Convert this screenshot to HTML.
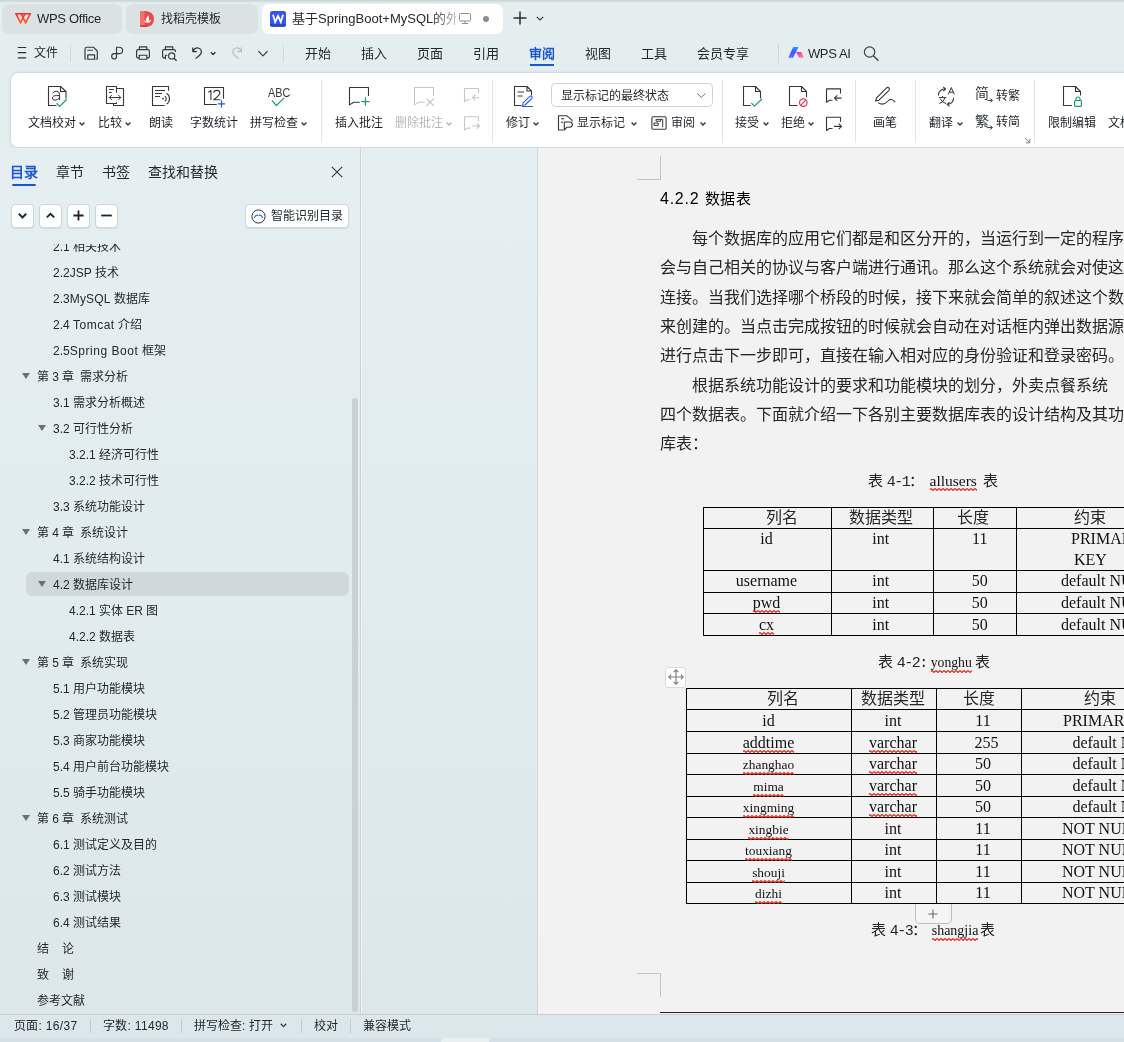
<!DOCTYPE html>
<html lang="zh-CN">
<head>
<meta charset="utf-8">
<title>WPS</title>
<style>
*{box-sizing:border-box;margin:0;padding:0}
html,body{width:1124px;height:1042px;overflow:hidden}
body{position:relative;background:#e4eeef;font-family:"Liberation Sans",sans-serif;font-size:13px;color:#1f2329}
.abs{position:absolute}
svg{position:absolute;overflow:visible}
.t{position:absolute;white-space:nowrap;line-height:1}
/* ---------- tab bar ---------- */
#top{left:0;top:0;width:1124px;height:148px;background:#e4eeef}
.tab{position:absolute;top:4px;height:29.5px;border-radius:7px;background:#dae2e4}
.tab.act{background:#fff;top:3.5px;height:30px}
.tab .t{top:7px;font-size:14px;color:#24292e}
/* ---------- menu row ---------- */
.mi{position:absolute;top:46px;font-size:13px;line-height:16px;color:#24292e;white-space:nowrap}
.vsep{position:absolute;width:1px;background:#cfd8da}
/* ---------- ribbon ---------- */
#ribbon{left:11px;top:73px;width:1130px;height:74px;background:#fff;border-radius:7px;box-shadow:0 0 3px rgba(60,80,90,.30)}
.rl{position:absolute;top:116px;font-size:12px;line-height:14px;color:#1f2329;white-space:nowrap;letter-spacing:0}
.rl.dis{color:#b4b8bc}
.rsep{position:absolute;top:80px;height:63px;width:1px;background:#e2e5e7}
/* ---------- sidebar ---------- */
#side{left:0;top:148px;width:360px;height:866px;background:linear-gradient(180deg,#e5eff1 0%,#e1ecef 50%,#dbe7eb 100%)}
#mid{left:362px;top:148px;width:176px;height:866px;background:linear-gradient(180deg,#e5eff1 0%,#e1ecef 50%,#dbe7eb 100%)}
#sdiv{left:360px;top:148px;width:2px;height:866px;background:linear-gradient(90deg,#ccd4d7 50%,#eef3f4 50%)}
.st{position:absolute;top:164px;font-size:14px;line-height:16px;color:#24292e;white-space:nowrap}
.sb{position:absolute;top:204px;height:23.5px;width:23px;border:1px solid #cfd5d8;border-radius:4px;background:#fdfefe;box-shadow:0 1px 1px rgba(80,100,110,.12)}
.toc{position:absolute;font-size:12px;line-height:14px;color:#24292e;white-space:nowrap}
.tri{position:absolute;width:0;height:0;border-left:4px solid transparent;border-right:4px solid transparent;border-top:6px solid #6b7075}
/* ---------- page ---------- */
#page{left:537px;top:148px;width:587px;height:866px;background:#f2f2f2;border-left:1px solid #d3d7d9;overflow:hidden;font-family:"Liberation Serif",serif;color:#111}

#page .p{font-size:16px;line-height:16px;color:#262626}
#page .c{font-size:15px;line-height:16px;color:#262626}
#page .m{font-family:"Liberation Mono",monospace;letter-spacing:-1.5px}
#page .h{font-size:16px;line-height:16px;color:#262626}
#page .l{font-size:16px;line-height:16px;color:#111}
#page .w{position:relative;display:inline-block}
#page .w .sq{position:absolute;left:0;bottom:-2px;width:100%;height:3px;overflow:hidden}
/* ---------- status ---------- */
#status{left:0;top:1014px;width:1124px;height:28px;background:#dce7eb;border-top:1px solid #c6d0d4}
.ss{position:absolute;top:1019px;font-size:12px;line-height:14px;color:#24292e;white-space:nowrap}
</style>
</head>
<body>
<div id="root" style="position:absolute;left:0;top:0;width:1124px;height:1042px;will-change:transform;overflow:hidden">
<div id="top" class="abs"></div>
<!--TABS-->
<div class="abs" style="left:0;top:0;width:1124px;height:3px;background:linear-gradient(180deg,rgba(90,110,120,.22),rgba(90,110,120,0))"></div>
<div class="tab" style="left:2px;width:120px"></div>
<svg style="left:0;top:0" width="600" height="40" viewBox="0 0 600 40" fill="none">
<defs><linearGradient id="wl" x1="0" y1="0" x2="0" y2="1"><stop offset="0" stop-color="#ff2a2a"/><stop offset="1" stop-color="#ff5a1a"/></linearGradient></defs>
<path d="M16 13.8 H25 L20.5 22.8 Z M21.2 13.8 H30.2 L25.7 22.8 Z" stroke="url(#wl)" stroke-width="1.6" stroke-linejoin="miter"/>
</svg>
<div class="t" style="left:37px;top:12px;font-size:13px;letter-spacing:-.3px;color:#24292e">WPS Office</div>
<div class="tab" style="left:126px;width:132px"></div>
<svg style="left:140px;top:11px" width="14" height="16" viewBox="0 0 14 16"><path d="M0 2 Q0 0 2 0 L6 0 Q14 1 14 8 Q14 15 6 16 L2 16 Q0 16 0 14Z" fill="#ec4a4a"/><path d="M0 2 Q0 0 2 0 L4.6 0 L4.6 16 L2 16 Q0 16 0 14Z" fill="#f47068"/><path d="M0 14.2 H8 Q7 16 6 16 H2 Q0 16 0 14.2Z" fill="#d93636"/><path d="M7.3 12 C5.3 10 5.8 6.5 8.4 4.2 C9.4 7 9.4 10 7.3 12Z M8 12.2 C9.3 11.8 10.8 10.6 11.2 8.4 C9.8 8.8 8.6 10 8 12.2Z M6.6 12.2 C6.2 10.6 5.4 9.6 4.2 9.2 C4.4 10.8 5.2 11.8 6.6 12.2Z" fill="#fff"/></svg>
<div class="t" style="left:161px;top:13px;font-size:12px;color:#24292e">找稻壳模板</div>
<div class="tab act" style="left:262px;width:241px"></div>
<svg style="left:270px;top:11px" width="16" height="16" viewBox="0 0 16 16"><rect x="0" y="0" width="16" height="15.8" rx="2.2" fill="#3458ea"/><path d="M0 13 H16 V13.6 Q16 15.8 13.8 15.8 H2.2 Q0 15.8 0 13.6Z" fill="#2747c9"/><path d="M3 3.8 L5.2 11 L8 5 L10.8 11 L13 3.8" fill="none" stroke="#fff" stroke-width="1.8" stroke-linejoin="miter"/></svg>
<div class="t" style="left:292px;top:10px;font-size:13px;line-height:18px;height:18px;color:#24292e;width:164px;overflow:hidden;-webkit-mask-image:linear-gradient(90deg,#000 85%,rgba(0,0,0,.28) 100%);mask-image:linear-gradient(90deg,#000 85%,rgba(0,0,0,.28) 100%)">基于SpringBoot+MySQL的外卖</div>
<svg style="left:459px;top:13px" width="12" height="11" viewBox="0 0 12 11"><rect x="0.5" y="0.5" width="11" height="7.5" rx="1.2" fill="none" stroke="#8a9094" stroke-width="1"/><path d="M6 8 V10 M3 10.5 H9" stroke="#8a9094" stroke-width="1" fill="none"/></svg>
<div class="abs" style="left:483px;top:16px;width:6px;height:6px;border-radius:3px;background:#8a8e92"></div>
<svg style="left:513px;top:11px" width="14" height="14" viewBox="0 0 14 14"><path d="M7 0.5 V13.5 M0.5 7 H13.5" stroke="#2b2f33" stroke-width="1.5"/></svg>
<svg style="left:536px;top:16px" width="8" height="5" viewBox="0 0 8 5"><path d="M0.8 0.8 L4 4 L7.2 0.8" fill="none" stroke="#3a3f44" stroke-width="1.2"/></svg>
<!--/TABS-->
<!--MENU-->
<svg style="left:0;top:36px" width="900" height="34" viewBox="0 36 900 34" fill="none" stroke="#33383d" stroke-width="1.15" stroke-linejoin="round">
<path d="M17.8 47.5 H26.2 M17.8 52.6 H26.2 M17.8 57.8 H26.2" stroke="#2b2f33"/>
<!-- save -->
<path d="M86.4 59 H85 V49 Q85 47.2 86.8 47.2 H93.4 L97.3 51 V59 H95.6 M87.3 50.2 H92.8"/>
<rect x="87.8" y="54.8" width="6.8" height="4.4"/>
<!-- export -->
<path d="M116.5 57 V47.2 H119 Q122.6 47.2 122.6 50.4 Q122.6 53.6 119 53.6 H114.2 Q111.7 53.6 111.7 56.3 Q111.7 59 114.1 59 Q116.5 59 116.5 56.4"/>
<!-- print -->
<path d="M139.4 49.6 V46.8 H146.8 V49.6 M139 57.8 H138 Q136.6 57.8 136.6 56.4 V51 Q136.6 49.6 138 49.6 H148 Q149.4 49.6 149.4 51 V56.4 Q149.4 57.8 148 57.8 H147"/>
<rect x="139.2" y="55.2" width="7.6" height="4"/>
<!-- print preview -->
<path d="M165.4 49.6 V46.8 H172.8 V49.6 M165.2 57.8 H164 Q162.6 57.8 162.6 56.4 V51 Q162.6 49.6 164 49.6 H174 Q175.4 49.6 175.4 51 V52 M165.4 59.2 V55.2 H167.4"/>
<circle cx="171.7" cy="55.9" r="3.1"/><path d="M174 58.2 L176.6 60.8" stroke-width="1.3"/>
<!-- undo -->
<path d="M192.8 47.6 V51.6 H196.8 M193 51.4 Q194.6 47.6 198 48 Q201.4 48.6 201.4 51.8 Q201.4 54.6 195.6 58.6" stroke-width="1.25"/>
<path d="M210.8 52.2 L213.1 54.5 L215.4 52.2" stroke-width="1.4"/>
<!-- redo -->
<path d="M241.4 47.6 V51.6 H237.4 M241.2 51.4 Q239.6 47.6 236.2 48 Q232.8 48.6 232.8 51.8 Q232.8 54.6 238.6 58.6" stroke="#b9bfc2" stroke-width="1.2"/>
<path d="M258.4 51.2 L263 55.8 L267.6 51.2" stroke-width="1.2"/>
<!-- search -->
<circle cx="869.6" cy="52" r="5.2" stroke="#3a3f44" stroke-width="1.2"/><path d="M873.4 55.8 L878.4 60.8" stroke="#3a3f44" stroke-width="1.3"/>
</svg>
<div class="mi" style="left:34px;font-size:12px;top:45px">文件</div>
<div class="vsep" style="left:70px;top:45px;height:17px"></div>
<div class="vsep" style="left:283px;top:45px;height:17px"></div>
<div class="mi" style="left:305px">开始</div>
<div class="mi" style="left:361px">插入</div>
<div class="mi" style="left:417px">页面</div>
<div class="mi" style="left:473px">引用</div>
<div class="mi" style="left:529px;color:#1a56d6;font-weight:bold">审阅</div>
<div class="abs" style="left:530px;top:64px;width:24px;height:2px;background:#1a56d6"></div>
<div class="mi" style="left:585px">视图</div>
<div class="mi" style="left:641px">工具</div>
<div class="mi" style="left:697px">会员专享</div>
<div class="vsep" style="left:778px;top:44px;height:19px"></div>
<svg style="left:0;top:0" width="1124" height="70" viewBox="0 0 1124 70"><defs><linearGradient id="ai1" x1="0" y1="0" x2="0" y2="1"><stop offset="0" stop-color="#1aa0ff"/><stop offset=".45" stop-color="#3d55ff"/><stop offset="1" stop-color="#4f7bff"/></linearGradient><linearGradient id="ai2" x1="0" y1="0" x2="1" y2="1"><stop offset="0" stop-color="#ee18f2"/><stop offset="1" stop-color="#ff9a62"/></linearGradient></defs><path d="M793.2 47 H798.4 L793.2 57.8 H788.2 Z" fill="url(#ai1)"/><path d="M796 52.1 H801.4 L803.8 57.8 H799.1 Z" fill="url(#ai2)"/></svg>
<div class="mi" style="left:808px;font-size:13px;letter-spacing:-.4px">WPS AI</div>
<!--/MENU-->
<div id="ribbon" class="abs"></div>
<!--RIBBON-->
<svg style="left:0;top:0" width="1124" height="150" viewBox="0 0 1124 150" fill="none" stroke="#33383d" stroke-width="1.1" stroke-linejoin="round">
<!-- 文档校对 -->
<path d="M56.4 105.5 H48.5 V86.5 H60.5 L66 91.5 V98.6 M60.5 86.5 V91.5 H66"/>
<path d="M52.8 93.4 Q53.6 91.2 56.2 91.2 Q59.6 91.2 59.6 94.4 V100.2 M59.6 95.6 H56.6 Q52.4 95.6 52.4 98 Q52.4 100.2 55 100.2 Q57.8 100.2 59.6 97.6" stroke-width="1"/>
<path d="M56.6 103.2 L59.7 106.4 L66.7 99.3" stroke="#1f9d6b" stroke-width="1.3"/>
<!-- 比较 -->
<path d="M116.5 92.8 V86.5 H106.5 V103.5 H116.5 V102.2 M116.5 88.5 H123.5 V105.5 H113.5 V103.5"/>
<path d="M109 89.5 H113.8 M109 92.5 H111.8 M109.3 97.5 H120.8 M111.8 95 L109.3 97.5 L111.8 100 M118.3 95 L120.8 97.5 L118.3 100" stroke-width="1"/>
<!-- 朗读 -->
<path d="M168.5 90.8 V86.5 H152.5 V105.5 H164.7 M155 90.5 H165 M155 93.5 H162 M155 96.5 H160"/>
<circle cx="163" cy="98.7" r=".9" fill="#33383d" stroke="none"/>
<path d="M164.8 96.1 A3.1 3.1 0 0 1 164.8 101.3 M166.6 93.3 A6.5 6.5 0 0 1 166.6 104.1"/>
<!-- 字数统计 -->
<path d="M223.5 98.8 V87.5 H204.5 V104.5 H216.8"/>
<path d="M208.3 92.4 L210.9 90.5 V100 M213.7 92.8 Q213.9 90.4 216.8 90.4 Q219.8 90.4 219.8 93 Q219.8 95.2 213.7 99.8 H220.4"/>
<path d="M221.5 100.2 V107.4 M217.9 103.8 H225.1" stroke="#1e5bd8" stroke-width="1.2"/>
<!-- 拼写检查 -->
<text x="268" y="96.9" font-family="Liberation Sans, sans-serif" font-size="13" textLength="22.2" lengthAdjust="spacingAndGlyphs" fill="#33383d" stroke="none">ABC</text>
<path d="M272 100.6 L276.4 105.5 L284.2 97.9" stroke="#1f9d6b" stroke-width="1.2"/>
<!-- 插入批注 -->
<path d="M368.5 96 V87.5 H349.5 V104.9 L353.7 102.3 H359.8"/>
<path d="M365.4 97.4 V105.8 M361.2 101.6 H369.6" stroke="#1f9d6b" stroke-width="1.2"/>
<!-- 删除批注 -->
<g stroke="#c3c7ca"><path d="M433.5 96 V87.5 H414.5 V104.9 L418.7 102.3 H424.8 M426.3 98.4 L433.9 106 M433.9 98.4 L426.3 106"/>
<path d="M478.5 93 V88.5 H464.5 V101.8 L467.4 99.8 H470.5 M479.5 97.7 H472.5 M475.3 95 L472.5 97.7 L475.3 100.4"/>
<path d="M478.5 121.3 V116.8 H464.5 V130.1 L467.4 128.1 H470.5 M472 126 H479.5 M476.7 123.3 L479.5 126 L476.7 128.7"/></g>
<!-- 修订 -->
<path d="M521.5 105.5 H514.5 V86.5 H527 L531.5 91 V95.5 M527 86.5 V91 H531.5 M517.5 92 H524 M517.5 96 H522.5"/>
<path d="M522.4 105.2 L523.2 102.8 L529.8 96.4 Q530.8 95.6 531.8 96.6 Q532.7 97.6 531.8 98.5 L525 105 Z M521.6 106.5 H533" stroke="#2a5fe0"/>
<!-- combo -->
<rect x="551.5" y="83.5" width="161" height="23" rx="4" stroke="#cdd2d5" fill="#fff" stroke-width="1"/>
<path d="M697.2 93.4 L701.3 97.4 L705.4 93.4" stroke="#6a7075" stroke-width="1"/>
<!-- 显示标记 -->
<path d="M563.5 130 H558.5 V115.8 H567 L572 120.2 V121.6 M561 118.7 H564.2 M561 122.2 H563"/>
<path d="M564.3 130 V122 H569.8 A2.6 2.6 0 0 1 569.8 127.2 H567 Z"/>
<!-- 审阅 -->
<rect x="651.9" y="116.8" width="14.2" height="12.4" rx="1.2"/>
<path d="M656 119.4 H662.7 V127.2 M656 119.4 V121.2 H660.6 V119.4 M654 123 H658.2 V125.4 H654 Z" stroke-width="1"/>
<!-- 接受 -->
<path d="M750.8 105.5 H743.5 V86.5 H755.5 L760.5 91.5 V98.5 M755.5 86.5 V91.5 H760.5"/>
<path d="M751.3 102.9 L754.4 106.1 L762 99" stroke="#1f9d6b" stroke-width="1.3"/>
<!-- 拒绝 -->
<path d="M797.5 105.5 H789.5 V86.5 H801.5 L806.5 91.5 V97.2 M801.5 86.5 V91.5 H806.5"/>
<circle cx="803.3" cy="102.6" r="3.8" stroke="#e0365a" stroke-width="1.2"/><path d="M800.6 105.3 L806 99.9" stroke="#e0365a" stroke-width="1.2"/>
<!-- prev/next change -->
<g transform="translate(362,0.4)"><path d="M478.5 93 V88.5 H464.5 V101.8 L467.4 99.8 H470.5 M479.5 97.7 H472.5 M475.3 95 L472.5 97.7 L475.3 100.4"/>
<path d="M478.5 121.3 V116.8 H464.5 V130.1 L467.4 128.1 H470.5 M472 126 H479.5 M476.7 123.3 L479.5 126 L476.7 128.7"/></g>
<!-- 画笔 -->
<path d="M875.6 100.9 L876.6 97.8 L886.6 87.9 Q887.8 86.9 889 88 Q890 89.2 889 90.4 L879 100.2 Z"/>
<path d="M878 102.6 C881 104.6 885 104.4 888 101 C890 98.6 892.8 98.8 895.2 102.2"/>
<!-- 翻译 -->
<path d="M938.4 95.6 Q938.6 89.6 945 88.8 M943.2 86.8 L945.6 88.8 L943.4 91.2"/>
<path d="M953.6 97.8 Q953.4 103.6 947.6 104.4 M949.6 106.4 L947.2 104.4 L949.4 102"/>
<path d="M948.3 94.4 L951.3 87.6 L954.3 94.4 M949.3 92.2 H953.3" stroke-width="1"/>
<path d="M938.9 97.6 H946.3 M942.6 96 V97.6 M939.4 103.6 Q943.8 102.2 944.9 97.8 M940.2 98.6 Q941.8 102.4 946.2 103.6" stroke-width="1"/>
<!-- arrows for 简 繁 -->
<path d="M987.6 100.4 H992.4 M990.4 98.4 L992.4 100.4 L990.4 102.4 M987.6 127.6 H992.4 M990.4 125.6 L992.4 127.6 L990.4 129.6" stroke-width="1"/>
<path d="M1025.2 138.4 L1029.6 142.6 M1029.8 139 V142.8 H1026" stroke="#7a8085" stroke-width="1"/>
<!-- 限制编辑 -->
<path d="M1072 105.5 H1063.5 V86.5 H1075.5 L1080.5 91.5 V95.5 M1075.5 86.5 V91.5 H1080.5"/>
<rect x="1074.6" y="100.5" width="6.8" height="5.8" rx=".8" stroke="#1f9d6b" stroke-width="1.2"/><path d="M1076 100.5 V99 A2 2 0 0 1 1080 99 V100.5" stroke="#1f9d6b" stroke-width="1.2"/>
</svg>
<div class="rl" style="left:28px">文档校对</div>
<div class="rl" style="left:98px">比较</div>
<div class="rl" style="left:149px">朗读</div>
<div class="rl" style="left:190px">字数统计</div>
<div class="rl" style="left:250px">拼写检查</div>
<div class="rl" style="left:335px">插入批注</div>
<div class="rl dis" style="left:395px">删除批注</div>
<div class="rl" style="left:506px">修订</div>
<div class="t" style="left:561px;top:90px;font-size:12px;color:#1f2329">显示标记的最终状态</div>
<div class="rl" style="left:577px">显示标记</div>
<div class="rl" style="left:671px">审阅</div>
<div class="rl" style="left:735px">接受</div>
<div class="rl" style="left:781px">拒绝</div>
<div class="rl" style="left:873px">画笔</div>
<div class="rl" style="left:929px">翻译</div>
<div class="t" style="left:975px;top:86px;font-size:14px;color:#33383d">简</div>
<div class="rl" style="left:996px;top:89px">转繁</div>
<div class="t" style="left:975px;top:114px;font-size:14px;color:#33383d">繁</div>
<div class="rl" style="left:996px;top:115px">转简</div>
<div class="rl" style="left:1048px">限制编辑</div>
<div class="rl" style="left:1108px">文档权限</div>
<div class="rsep" style="left:321px"></div><div class="rsep" style="left:492px"></div><div class="rsep" style="left:722px"></div><div class="rsep" style="left:855px"></div><div class="rsep" style="left:915px"></div><div class="rsep" style="left:1034px"></div>
<svg style="left:79px;top:122.4px" width="6" height="4" viewBox="0 0 6 4"><path d="M0.6 0.6 L3 3 L5.4 0.6" fill="none" stroke="#33383d" stroke-width="1.4"/></svg>
<svg style="left:125.3px;top:122px" width="6" height="4" viewBox="0 0 6 4"><path d="M0.6 0.6 L3 3 L5.4 0.6" fill="none" stroke="#33383d" stroke-width="1.4"/></svg>
<svg style="left:301px;top:122px" width="6" height="4" viewBox="0 0 6 4"><path d="M0.6 0.6 L3 3 L5.4 0.6" fill="none" stroke="#33383d" stroke-width="1.4"/></svg>
<svg style="left:446px;top:122px" width="6" height="4" viewBox="0 0 6 4"><path d="M0.6 0.6 L3 3 L5.4 0.6" fill="none" stroke="#b4b8bc" stroke-width="1.4"/></svg>
<svg style="left:533px;top:122px" width="6" height="4" viewBox="0 0 6 4"><path d="M0.6 0.6 L3 3 L5.4 0.6" fill="none" stroke="#33383d" stroke-width="1.4"/></svg>
<svg style="left:630.5px;top:122px" width="6" height="4" viewBox="0 0 6 4"><path d="M0.6 0.6 L3 3 L5.4 0.6" fill="none" stroke="#33383d" stroke-width="1.4"/></svg>
<svg style="left:699.8px;top:122px" width="6" height="4" viewBox="0 0 6 4"><path d="M0.6 0.6 L3 3 L5.4 0.6" fill="none" stroke="#33383d" stroke-width="1.4"/></svg>
<svg style="left:762.6px;top:122px" width="6" height="4" viewBox="0 0 6 4"><path d="M0.6 0.6 L3 3 L5.4 0.6" fill="none" stroke="#33383d" stroke-width="1.4"/></svg>
<svg style="left:808.4px;top:122px" width="6" height="4" viewBox="0 0 6 4"><path d="M0.6 0.6 L3 3 L5.4 0.6" fill="none" stroke="#33383d" stroke-width="1.4"/></svg>
<svg style="left:956.8px;top:122px" width="6" height="4" viewBox="0 0 6 4"><path d="M0.6 0.6 L3 3 L5.4 0.6" fill="none" stroke="#33383d" stroke-width="1.4"/></svg>
<!--/RIBBON-->
<div id="side" class="abs"></div>
<div id="sdiv" class="abs"></div>
<div id="mid" class="abs"></div>
<!--SIDE-->
<div class="st" style="left:10px;color:#1a56d6;font-weight:bold">目录</div>
<div class="abs" style="left:12px;top:184px;width:24px;height:2px;background:#1a56d6;border-radius:1px"></div>
<div class="st" style="left:56px">章节</div>
<div class="st" style="left:102px">书签</div>
<div class="st" style="left:148px">查找和替换</div>
<svg style="left:331px;top:166px" width="12" height="12" viewBox="0 0 12 12"><path d="M0.8 0.8 L11.2 11.2 M11.2 0.8 L0.8 11.2" stroke="#33383d" stroke-width="1.1"/></svg>
<div class="sb" style="left:10.5px"></div>
<svg style="left:14.5px;top:208px" width="15" height="15" viewBox="0 0 15 15"><path d="M3.8 5.8 L7.5 9.4 L11.2 5.8" fill="none" stroke="#1f2329" stroke-width="1.9"/></svg>
<div class="sb" style="left:38.5px"></div>
<svg style="left:42.5px;top:208px" width="15" height="15" viewBox="0 0 15 15"><path d="M3.8 9.4 L7.5 5.8 L11.2 9.4" fill="none" stroke="#1f2329" stroke-width="1.9"/></svg>
<div class="sb" style="left:66.5px"></div>
<svg style="left:70.5px;top:208px" width="15" height="15" viewBox="0 0 15 15"><path d="M7.5 2.4 V12.6 M2.4 7.5 H12.6" fill="none" stroke="#1f2329" stroke-width="1.8"/></svg>
<div class="sb" style="left:94.5px"></div>
<svg style="left:98.5px;top:208px" width="15" height="15" viewBox="0 0 15 15"><path d="M2.2 7.5 H12.8" fill="none" stroke="#1f2329" stroke-width="1.8"/></svg>
<div class="sb" style="left:245px;width:104px"></div>
<svg style="left:251px;top:209px" width="15" height="15" viewBox="0 0 15 15"><circle cx="7.5" cy="7.5" r="6.6" fill="none" stroke="#33383d" stroke-width="1"/><path d="M3.4 8.8 Q5 5.2 7.2 6.4" fill="none" stroke="#1e5bd8" stroke-width="1.1"/><path d="M7.8 6.4 Q10 5.2 11.6 8.8" fill="none" stroke="#1e5bd8" stroke-width="1.1"/></svg>
<div class="t" style="left:271px;top:210px;font-size:12px;color:#24292e">智能识别目录</div>
<div class="abs" style="left:0;top:244px;width:351px;height:770px;overflow:hidden">
<div class="abs" style="left:26px;top:328px;width:323px;height:24px;border-radius:6px;background:#cfd8db"></div>
<div class="toc" style="left:53px;top:-4px">2.1 相关技术</div>
<div class="toc" style="left:53px;top:22px">2.2JSP 技术</div>
<div class="toc" style="left:53px;top:48px">2.3<span style="letter-spacing:.2px">MySQL</span> 数据库</div>
<div class="toc" style="left:53px;top:74px">2.4 <span style="letter-spacing:.5px">Tomcat</span> 介绍</div>
<div class="toc" style="left:53px;top:100px">2.5<span style="letter-spacing:.55px">Spring Boot</span> 框架</div>
<div class="tri" style="left:22px;top:129px"></div>
<div class="toc" style="left:37px;top:126px">第 3 章<span style="margin-left:6px">需求分析</span></div>
<div class="toc" style="left:53px;top:152px">3.1 需求分析概述</div>
<div class="tri" style="left:38px;top:181px"></div>
<div class="toc" style="left:53px;top:178px">3.2 可行性分析</div>
<div class="toc" style="left:69px;top:204px">3.2.1 经济可行性</div>
<div class="toc" style="left:69px;top:230px">3.2.2 技术可行性</div>
<div class="toc" style="left:53px;top:256px">3.3 系统功能设计</div>
<div class="tri" style="left:22px;top:285px"></div>
<div class="toc" style="left:37px;top:282px">第 4 章<span style="margin-left:6px">系统设计</span></div>
<div class="toc" style="left:53px;top:308px">4.1 系统结构设计</div>
<div class="tri" style="left:38px;top:337px"></div>
<div class="toc" style="left:53px;top:334px">4.2 数据库设计</div>
<div class="toc" style="left:69px;top:360px">4.2.1 实体 ER 图</div>
<div class="toc" style="left:69px;top:386px">4.2.2 数据表</div>
<div class="tri" style="left:22px;top:415px"></div>
<div class="toc" style="left:37px;top:412px">第 5 章<span style="margin-left:6px">系统实现</span></div>
<div class="toc" style="left:53px;top:438px">5.1 用户功能模块</div>
<div class="toc" style="left:53px;top:464px">5.2 管理员功能模块</div>
<div class="toc" style="left:53px;top:490px">5.3 商家功能模块</div>
<div class="toc" style="left:53px;top:516px">5.4 用户前台功能模块</div>
<div class="toc" style="left:53px;top:542px">5.5 骑手功能模块</div>
<div class="tri" style="left:22px;top:571px"></div>
<div class="toc" style="left:37px;top:568px">第 6 章<span style="margin-left:6px">系统测试</span></div>
<div class="toc" style="left:53px;top:594px">6.1 测试定义及目的</div>
<div class="toc" style="left:53px;top:620px">6.2 测试方法</div>
<div class="toc" style="left:53px;top:646px">6.3 测试模块</div>
<div class="toc" style="left:53px;top:672px">6.4 测试结果</div>
<div class="toc" style="left:37px;top:698px">结<span style="margin-left:12.5px">论</span></div>
<div class="toc" style="left:37px;top:724px">致<span style="margin-left:12.5px">谢</span></div>
<div class="toc" style="left:37px;top:750px">参考文献</div>
</div>
<div class="abs" style="left:352px;top:398px;width:6px;height:614px;border-radius:3px;background:#c9d1d4"></div>
<!--/SIDE-->
<div id="page" class="abs">
<!--DOC-->
<svg style="left:0;top:0" width="0" height="0"><defs><pattern id="sq" width="4" height="3" patternUnits="userSpaceOnUse"><path d="M-1 2.5 L1 0.5 L3 2.5 L5 0.5" stroke="#f0281e" fill="none" stroke-width="1.15"/></pattern></defs></svg>
<div class="abs" style="left:122px;top:8px;width:1px;height:24px;background:#c4c4c4"></div>
<div class="abs" style="left:99px;top:31px;width:24px;height:1px;background:#c4c4c4"></div>
<div class="abs" style="left:122px;top:825px;width:1px;height:24px;background:#c4c4c4"></div>
<div class="abs" style="left:99px;top:825px;width:24px;height:1px;background:#c4c4c4"></div>
<div class="t" style="left:122px;top:43px;font-family:'Liberation Sans',sans-serif;font-size:15px;color:#000;font-weight:500"><span style="letter-spacing:.75px;font-size:16px;font-weight:400">4.2.2 </span><span style="letter-spacing:.5px">数据表</span></div>
<div class="t p" style="left:154px;top:83px">每个数据库的应用它们都是和区分开的，当运行到一定的程序时就</div>
<div class="t p" style="left:122px;top:112px">会与自己相关的协议与客户端进行通讯。那么这个系统就会对使这个</div>
<div class="t p" style="left:122px;top:142px">连接。当我们选择哪个桥段的时候，接下来就会简单的叙述这个数据</div>
<div class="t p" style="left:122px;top:171px">来创建的。当点击完成按钮的时候就会自动在对话框内弹出数据源，</div>
<div class="t p" style="left:122px;top:200px">进行点击下一步即可，直接在输入相对应的身份验证和登录密码。</div>
<div class="t p" style="left:154px;top:230px">根据系统功能设计的要求和功能模块的划分，外卖点餐系统</div>
<div class="t p" style="left:122px;top:259px">四个数据表。下面就介绍一下各别主要数据库表的设计结构及其功能</div>
<div class="t p" style="left:122px;top:288px">库表：</div>
<div class="t c" style="left:330px;top:325px">表 <span class="m">4-1</span>：</div>
<div class="t l" style="left:391.5px;top:325px;font-size:15.5px"><span class="w">allusers<svg class="sq"><rect width="100%" height="3" fill="url(#sq)"/></svg></span></div>
<div class="t c" style="left:444.5px;top:325px">表</div>
<div class="t c" style="left:340px;top:506px">表 <span class="m">4-2:</span></div>
<div class="t l" style="left:392.70000000000005px;top:507px;font-size:13.7px"><span class="w">yonghu<svg class="sq"><rect width="100%" height="3" fill="url(#sq)"/></svg></span></div>
<div class="t c" style="left:437px;top:506px">表</div>
<div class="t c" style="left:333px;top:774px">表 <span class="m">4-3</span>：</div>
<div class="t l" style="left:393.70000000000005px;top:775px;font-size:14px"><span class="w">shangjia<svg class="sq"><rect width="100%" height="3" fill="url(#sq)"/></svg></span></div>
<div class="t c" style="left:442.29999999999995px;top:774px">表</div>
<div class="abs" style="left:165px;top:359px;width:427px;height:1px;background:#000"></div>
<div class="abs" style="left:165px;top:380px;width:427px;height:1px;background:#000"></div>
<div class="abs" style="left:165px;top:422px;width:427px;height:1px;background:#000"></div>
<div class="abs" style="left:165px;top:444px;width:427px;height:1px;background:#000"></div>
<div class="abs" style="left:165px;top:465px;width:427px;height:1px;background:#000"></div>
<div class="abs" style="left:165px;top:487px;width:427px;height:1px;background:#000"></div>
<div class="abs" style="left:165px;top:359px;width:1px;height:129px;background:#000"></div>
<div class="abs" style="left:293px;top:359px;width:1px;height:129px;background:#000"></div>
<div class="abs" style="left:395px;top:359px;width:1px;height:129px;background:#000"></div>
<div class="abs" style="left:478px;top:359px;width:1px;height:129px;background:#000"></div>
<div class="t h" style="left:144px;width:200px;text-align:center;top:361.5px">列名</div>
<div class="t h" style="left:243px;width:200px;text-align:center;top:361.5px">数据类型</div>
<div class="t h" style="left:335px;width:200px;text-align:center;top:361.5px">长度</div>
<div class="t h" style="left:536px;top:361.5px">约束</div>
<div class="t l" style="left:128.5px;width:200px;text-align:center;top:383px">id</div>
<div class="t l" style="left:242.70000000000005px;width:200px;text-align:center;top:383px">int</div>
<div class="t l" style="left:341.79999999999995px;width:200px;text-align:center;top:383px">11</div>
<div class="t l" style="left:533px;top:383px">PRIMARY</div>
<div class="t l" style="left:128.5px;width:200px;text-align:center;top:425px">username</div>
<div class="t l" style="left:242.70000000000005px;width:200px;text-align:center;top:425px">int</div>
<div class="t l" style="left:341.79999999999995px;width:200px;text-align:center;top:425px">50</div>
<div class="t l" style="left:523px;top:425px">default NULL</div>
<div class="t l" style="left:128.5px;width:200px;text-align:center;top:447px"><span class="w">pwd<svg class="sq"><rect width="100%" height="3" fill="url(#sq)"/></svg></span></div>
<div class="t l" style="left:242.70000000000005px;width:200px;text-align:center;top:447px">int</div>
<div class="t l" style="left:341.79999999999995px;width:200px;text-align:center;top:447px">50</div>
<div class="t l" style="left:523px;top:447px">default NULL</div>
<div class="t l" style="left:128.5px;width:200px;text-align:center;top:469px"><span class="w">cx<svg class="sq"><rect width="100%" height="3" fill="url(#sq)"/></svg></span></div>
<div class="t l" style="left:242.70000000000005px;width:200px;text-align:center;top:469px">int</div>
<div class="t l" style="left:341.79999999999995px;width:200px;text-align:center;top:469px">50</div>
<div class="t l" style="left:523px;top:469px">default NULL</div>
<div class="t l" style="left:536px;top:403.5px">KEY</div>
<div class="abs" style="left:127px;top:519px;width:21px;height:21px;border:1px solid #d9d9d9;border-radius:3px;background:#fefefe"></div>
<svg style="left:130.5px;top:522.4px" width="14" height="14" viewBox="0 0 14 14"><path d="M7 -0.2 V14.2 M-0.2 7 H14.2 M4.6 2.2 L7 -0.2 L9.4 2.2 M4.6 11.8 L7 14.2 L9.4 11.8 M2.2 4.6 L-0.2 7 L2.2 9.4 M11.8 4.6 L14.2 7 L11.8 9.4" fill="none" stroke="#7a7a7a" stroke-width="1.1"/></svg>
<div class="abs" style="left:148px;top:540px;width:444px;height:1px;background:#000"></div>
<div class="abs" style="left:148px;top:561px;width:444px;height:1px;background:#000"></div>
<div class="abs" style="left:148px;top:583px;width:444px;height:1px;background:#000"></div>
<div class="abs" style="left:148px;top:605px;width:444px;height:1px;background:#000"></div>
<div class="abs" style="left:148px;top:626px;width:444px;height:1px;background:#000"></div>
<div class="abs" style="left:148px;top:648px;width:444px;height:1px;background:#000"></div>
<div class="abs" style="left:148px;top:669px;width:444px;height:1px;background:#000"></div>
<div class="abs" style="left:148px;top:691px;width:444px;height:1px;background:#000"></div>
<div class="abs" style="left:148px;top:712px;width:444px;height:1px;background:#000"></div>
<div class="abs" style="left:148px;top:734px;width:444px;height:1px;background:#000"></div>
<div class="abs" style="left:148px;top:755px;width:444px;height:1px;background:#000"></div>
<div class="abs" style="left:148px;top:540px;width:1px;height:216px;background:#000"></div>
<div class="abs" style="left:313px;top:540px;width:1px;height:216px;background:#000"></div>
<div class="abs" style="left:398px;top:540px;width:1px;height:216px;background:#000"></div>
<div class="abs" style="left:483px;top:540px;width:1px;height:216px;background:#000"></div>
<div class="t h" style="left:144.5px;width:200px;text-align:center;top:542.5px">列名</div>
<div class="t h" style="left:255px;width:200px;text-align:center;top:542.5px">数据类型</div>
<div class="t h" style="left:340.5px;width:200px;text-align:center;top:542.5px">长度</div>
<div class="t h" style="left:546.4000000000001px;top:542.5px">约束</div>
<div class="t l" style="left:130.5px;width:200px;text-align:center;top:564.5px">id</div>
<div class="t l" style="left:255px;width:200px;text-align:center;top:564.5px">int</div>
<div class="t l" style="left:345px;width:200px;text-align:center;top:564.5px">11</div>
<div class="t l" style="left:525px;top:564.5px">PRIMARY KEY</div>
<div class="t l" style="left:130.5px;width:200px;text-align:center;top:586.5px"><span class="w">addtime<svg class="sq"><rect width="100%" height="3" fill="url(#sq)"/></svg></span></div>
<div class="t l" style="left:255px;width:200px;text-align:center;top:586.5px"><span class="w">varchar<svg class="sq"><rect width="100%" height="3" fill="url(#sq)"/></svg></span></div>
<div class="t l" style="left:345px;width:200px;text-align:center;top:586.5px"><span style="position:relative;left:3.5px">255</span></div>
<div class="t l" style="left:534.4000000000001px;top:586.5px">default NULL</div>
<div class="t l" style="left:130.5px;width:200px;text-align:center;top:609.0px;font-size:13.4px"><span class="w">zhanghao<svg class="sq"><rect width="100%" height="3" fill="url(#sq)"/></svg></span></div>
<div class="t l" style="left:255px;width:200px;text-align:center;top:608.0px"><span class="w">varchar<svg class="sq"><rect width="100%" height="3" fill="url(#sq)"/></svg></span></div>
<div class="t l" style="left:345px;width:200px;text-align:center;top:608.0px">50</div>
<div class="t l" style="left:534.4000000000001px;top:608.0px">default NULL</div>
<div class="t l" style="left:130.5px;width:200px;text-align:center;top:630.5px;font-size:13.4px"><span class="w">mima<svg class="sq"><rect width="100%" height="3" fill="url(#sq)"/></svg></span></div>
<div class="t l" style="left:255px;width:200px;text-align:center;top:629.5px"><span class="w">varchar<svg class="sq"><rect width="100%" height="3" fill="url(#sq)"/></svg></span></div>
<div class="t l" style="left:345px;width:200px;text-align:center;top:629.5px">50</div>
<div class="t l" style="left:534.4000000000001px;top:629.5px">default NULL</div>
<div class="t l" style="left:130.5px;width:200px;text-align:center;top:652.0px;font-size:13.4px"><span class="w">xingming<svg class="sq"><rect width="100%" height="3" fill="url(#sq)"/></svg></span></div>
<div class="t l" style="left:255px;width:200px;text-align:center;top:651.0px"><span class="w">varchar<svg class="sq"><rect width="100%" height="3" fill="url(#sq)"/></svg></span></div>
<div class="t l" style="left:345px;width:200px;text-align:center;top:651.0px">50</div>
<div class="t l" style="left:534.4000000000001px;top:651.0px">default NULL</div>
<div class="t l" style="left:130.5px;width:200px;text-align:center;top:673.5px;font-size:13.4px"><span class="w">xingbie<svg class="sq"><rect width="100%" height="3" fill="url(#sq)"/></svg></span></div>
<div class="t l" style="left:255px;width:200px;text-align:center;top:672.5px">int</div>
<div class="t l" style="left:345px;width:200px;text-align:center;top:672.5px">11</div>
<div class="t l" style="left:524px;top:672.5px">NOT NULL</div>
<div class="t l" style="left:130.5px;width:200px;text-align:center;top:695.0px;font-size:13.4px"><span class="w">touxiang<svg class="sq"><rect width="100%" height="3" fill="url(#sq)"/></svg></span></div>
<div class="t l" style="left:255px;width:200px;text-align:center;top:694.0px">int</div>
<div class="t l" style="left:345px;width:200px;text-align:center;top:694.0px">11</div>
<div class="t l" style="left:524px;top:694.0px">NOT NULL</div>
<div class="t l" style="left:130.5px;width:200px;text-align:center;top:716.5px;font-size:13.4px"><span class="w">shouji<svg class="sq"><rect width="100%" height="3" fill="url(#sq)"/></svg></span></div>
<div class="t l" style="left:255px;width:200px;text-align:center;top:715.5px">int</div>
<div class="t l" style="left:345px;width:200px;text-align:center;top:715.5px">11</div>
<div class="t l" style="left:524px;top:715.5px">NOT NULL</div>
<div class="t l" style="left:130.5px;width:200px;text-align:center;top:738.0px;font-size:13.4px"><span class="w">dizhi<svg class="sq"><rect width="100%" height="3" fill="url(#sq)"/></svg></span></div>
<div class="t l" style="left:255px;width:200px;text-align:center;top:737.0px">int</div>
<div class="t l" style="left:345px;width:200px;text-align:center;top:737.0px">11</div>
<div class="t l" style="left:524px;top:737.0px">NOT NULL</div>
<div class="abs" style="left:377px;top:756px;width:37px;height:19.5px;border:1px solid #bdbdbd;border-top:none;border-radius:0 0 5px 5px;background:#f5f5f5"></div>
<svg style="left:390px;top:761px" width="10" height="10" viewBox="0 0 10 10"><path d="M5 0.5 V9.5 M0.5 5 H9.5" stroke="#666" stroke-width="1.1"/></svg>
<div class="abs" style="left:122px;top:864px;width:470px;height:1px;background:#222"></div>
<!--/DOC-->
</div>
<div id="status" class="abs"></div>
<!--STATUS-->
<div class="ss" style="left:14px;letter-spacing:.3px">页面: 16/37</div>
<div class="vsep" style="left:90px;top:1019px;height:14px;background:#c3cdd1"></div>
<div class="ss" style="left:103px;letter-spacing:.3px">字数: 11498</div>
<div class="vsep" style="left:181px;top:1019px;height:14px;background:#c3cdd1"></div>
<div class="ss" style="left:194px">拼写检查: 打开</div>
<svg style="left:280px;top:1023px" width="7" height="5" viewBox="0 0 7 5"><path d="M0.8 0.8 L3.5 3.6 L6.2 0.8" fill="none" stroke="#33383d" stroke-width="1.3"/></svg>
<div class="vsep" style="left:301px;top:1019px;height:14px;background:#c3cdd1"></div>
<div class="ss" style="left:314px">校对</div>
<div class="vsep" style="left:350px;top:1019px;height:14px;background:#c3cdd1"></div>
<div class="ss" style="left:363px">兼容模式</div>
<div class="abs" style="left:0;top:1038px;width:1124px;height:4px;background:#d3e0e5"></div><div class="abs" style="left:441px;top:1038px;width:48px;height:4px;background:#e9f0f2"></div>
<!--/STATUS-->
</div>
</body>
</html>
